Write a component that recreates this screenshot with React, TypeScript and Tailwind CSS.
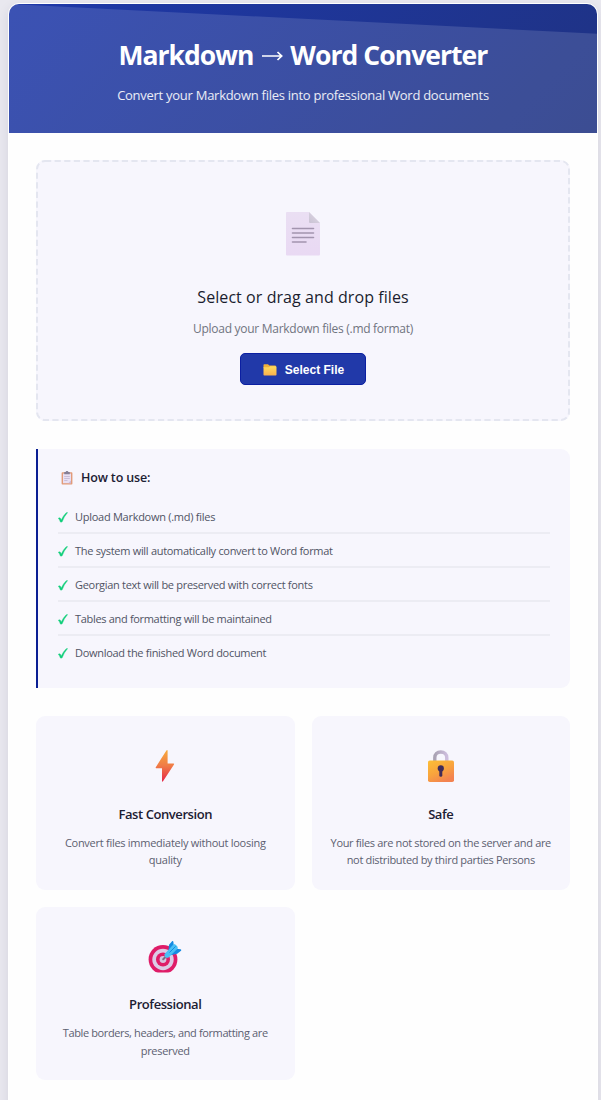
import type { ReactNode } from "react";

const steps = [
  { text: "Upload Markdown (.md) files", className: "tracking-[-0.27px]" },
  { text: "The system will automatically convert to Word format", className: "tracking-[-0.3px]" },
  { text: "Georgian text will be preserved with correct fonts", className: "tracking-[-0.3px]" },
  { text: "Tables and formatting will be maintained", className: "tracking-[-0.32px]" },
  { text: "Download the finished Word document", className: "tracking-[-0.3px]" },
];

const DocumentIcon = () => (
  <svg width="34" height="44" viewBox="0 0 34 44">
    <defs>
      <linearGradient id="page" x1="0" y1="0" x2="0" y2="1">
        <stop offset="0" stopColor="#eadff3" />
        <stop offset="1" stopColor="#e9d9f3" />
      </linearGradient>
      <linearGradient id="fold" x1="0" y1="1" x2="1" y2="0">
        <stop offset="0" stopColor="#c9c2d3" />
        <stop offset="1" stopColor="#e0dae6" />
      </linearGradient>
    </defs>
    <path d="M1 0H23L34 11V42.5Q34 43.5 33 43.5H1Q0 43.5 0 42.5V1Q0 0 1 0Z" fill="url(#page)" />
    <path d="M23 0L34 11H24Q23 11 23 10Z" fill="url(#fold)" />
    <path d="M6.5 16.5H27.5M6.5 21H27.5M6.5 25.5H27.5M6.5 30H20" stroke="#a294ae" strokeWidth="1.6" strokeLinecap="round" />
  </svg>
);

const FolderIcon = () => (
  <svg width="14" height="12" viewBox="0 0 14 12">
    <defs>
      <linearGradient id="folder" x1="0" y1="0" x2="0" y2="1">
        <stop offset="0" stopColor="#ffdc5c" />
        <stop offset="1" stopColor="#f9b04e" />
      </linearGradient>
    </defs>
    <path d="M0.5 1Q0.5 0.3 1.2 0.3H5L6.3 1.5H12Q13 1.5 13 2.5V4H0.5Z" fill="#efb03a" />
    <path d="M0.5 3.2H6L7 2.2H12.6Q13.5 2.2 13.5 3V10.7Q13.5 11.5 12.7 11.5H1.3Q0.5 11.5 0.5 10.7Z" fill="url(#folder)" />
  </svg>
);

const ClipboardIcon = () => (
  <svg width="12" height="14" viewBox="0 0 12 14">
    <rect x="0.6" y="1.2" width="10.8" height="12.4" rx="0.8" fill="#e29b79" />
    <rect x="2" y="2.6" width="8" height="9.6" fill="#e9e0f3" />
    <rect x="3.2" y="1" width="5.6" height="2.2" rx="0.5" fill="#857f97" />
    <rect x="4.7" y="0" width="2.6" height="2" rx="1" fill="#857f97" />
    <path d="M3.2 5.5H8.8M3.2 7.5H8.8M3.2 9.5H6.5" stroke="#c0b5d1" strokeWidth="0.8" />
    <path d="M10 9.5V12.2H7.3Z" fill="#c9b8dc" />
  </svg>
);

const CheckIcon = () => (
  <svg width="10" height="11" viewBox="0 0 10 11">
    <path
      d="M0.3 6.2Q1.5 5.2 2.4 6.2L3.2 8.1Q5.2 3.6 8 0.9Q8.8 0.3 9.6 0.6Q6 4.6 4.2 9.7Q3.2 10.4 2.4 10Q1.6 7.5 0.3 6.2Z"
      fill="#10ce7a"
      stroke="#10ce7a"
      strokeWidth="0.4"
    />
  </svg>
);

const BoltIcon = () => (
  <svg width="20" height="34" viewBox="0 0 20 34">
    <defs>
      <linearGradient id="bolt" x1="0" y1="0" x2="0" y2="1">
        <stop offset="0" stopColor="#f8ab3c" />
        <stop offset="0.5" stopColor="#f07b46" />
        <stop offset="1" stopColor="#e52648" />
      </linearGradient>
    </defs>
    <path d="M11.4 1.4Q12.6 0.2 12.6 2V14.4H18.4Q19.5 14.4 19 15.4L8.2 32Q7 33.4 7 31.8V19.3H1.2Q0.3 19.3 0.8 18.2Z" fill="url(#bolt)" />
  </svg>
);

const LockIcon = () => (
  <svg width="28" height="34" viewBox="0 0 28 34">
    <defs>
      <linearGradient id="lock" x1="0" y1="0" x2="0.6" y2="1">
        <stop offset="0" stopColor="#fdbf35" />
        <stop offset="0.55" stopColor="#f9a43d" />
        <stop offset="1" stopColor="#f38250" />
      </linearGradient>
      <linearGradient id="shackle" x1="0" y1="0" x2="1" y2="0">
        <stop offset="0" stopColor="#aaa3b4" />
        <stop offset="1" stopColor="#cdbddd" />
      </linearGradient>
    </defs>
    <path d="M7.8 13V8.8C7.8 5.2 10.2 3 13.8 3C17.4 3 19.8 5.2 19.8 8.8V13" fill="none" stroke="url(#shackle)" strokeWidth="3.4" />
    <rect x="1" y="11.5" width="26" height="21.5" rx="1.8" fill="url(#lock)" />
    <circle cx="13.8" cy="19.4" r="3.1" fill="#412b58" />
    <rect x="12.3" y="20" width="3" height="7.8" rx="1.4" fill="#412b58" />
  </svg>
);

const TargetIcon = () => (
  <svg width="34" height="34" viewBox="0 0 34 34">
    <clipPath id="board">
      <rect width="34" height="32.6" />
    </clipPath>
    <g clipPath="url(#board)">
      <circle cx="15" cy="19.5" r="14.4" fill="#df1c68" />
      <circle cx="15" cy="19.5" r="10.7" fill="#dccbe6" />
      <circle cx="15" cy="19.5" r="7" fill="#df1c68" />
      <circle cx="15" cy="19.5" r="3.4" fill="#d6c3df" />
    </g>
    <path d="M15.2 19.3L19 15.5" stroke="#766e85" strokeWidth="2" strokeLinecap="round" />
    <path d="M20.5 10.5L21 4.8L24.3 1Q25.3 0.7 25.4 2L25.8 5.6L20.8 13Z" fill="#168be2" />
    <path d="M23 13.5L28.8 8.8L32.6 9.2Q34 9.8 33 10.7L29.2 13.8L22.5 15.2Z" fill="#168be2" />
    <path d="M16.4 14.2L25.8 4.1Q29.2 4.8 29.9 8.2L20.6 17.6Q16.6 18.8 16.4 14.2Z" fill="#49c0f5" />
    <path d="M21.5 12.5L27.6 6.4" stroke="#168be2" strokeWidth="1" />
  </svg>
);

type FeatureProps = {
  icon: ReactNode;
  title: string;
  children: ReactNode;
};

const Feature = ({ icon, title, children }: FeatureProps) => (
  <div className="h-[173.5px] rounded-[9px] bg-[#f7f6fd] pt-[33px] text-center">
    <div className="flex h-[34px] justify-center">{icon}</div>
    <h3 className="mt-[20.5px] h-5 text-[13px] leading-5 font-semibold tracking-[-0.42px] text-[#1c2033]">{title}</h3>
    <p className="mt-[10px] text-[11px] leading-[17.5px] whitespace-nowrap text-[#5c6070]">{children}</p>
  </div>
);

export default function App() {
  return (
    <div className="h-[1100px] overflow-hidden bg-[#e9e8ef] pt-[3px] pr-[3px] pl-2 font-['Open_Sans','Noto_Sans',sans-serif]">
      <main className="h-[1120px] rounded-t-[11px] border border-white bg-[#fefefe] shadow-[0_4px_12px_rgba(40,40,80,0.1)]">
        <header className="relative h-[129px] overflow-hidden rounded-t-[10px] bg-linear-135 from-[#1e38a9] to-[#1f3282] pt-8 text-center text-white">
          <div className="absolute inset-0 bg-white/13 [clip-path:polygon(0_0,100%_23%,100%_100%,0_100%)]" />
          <h1 className="relative flex h-10 items-center justify-center text-[26.5px] font-bold whitespace-nowrap">
            <span className="tracking-[-1px]">Markdown</span>
            <svg className="mr-[7px] ml-[9px]" width="21" height="12" viewBox="0 0 21 12" fill="none" stroke="white" strokeWidth="1.7">
              <path d="M0 6H19.5M15.5 2L19.7 6L15.5 10" />
            </svg>
            <span className="tracking-[-0.95px]">Word Converter</span>
          </h1>
          <p className="relative mt-[9px] text-[13px] leading-5 tracking-[-0.27px] whitespace-nowrap text-white/90">
            Convert your Markdown files into professional Word documents
          </p>
        </header>

        <div className="p-[27px]">
          <section className="relative flex h-[261px] flex-col items-center rounded-[9px] bg-[#f7f6fd] pt-[52px]">
            <svg className="absolute inset-0" width="100%" height="100%">
              <rect x="1" y="1" width="532" height="259" rx="8" fill="none" stroke="#e4e6f0" strokeWidth="2" strokeDasharray="6.2 3.4" />
            </svg>
            <DocumentIcon />
            <h2 className="mt-[29px] text-[16px] leading-6 font-medium tracking-[0.07px] whitespace-nowrap text-[#1a1d2e]">
              Select or drag and drop files
            </h2>
            <p className="mt-[10px] text-[12px] leading-5 tracking-[-0.28px] whitespace-nowrap text-[#70747f]">
              Upload your Markdown files (.md format)
            </p>
            <button className="mt-[14px] flex h-8 w-[126px] items-center justify-center gap-2 rounded-[5px] border border-[#0b1fa2] bg-[#2139a9] pt-px pl-px font-['Liberation_Sans',sans-serif] text-[12px] font-bold whitespace-nowrap text-white">
              <FolderIcon />
              Select File
            </button>
          </section>

          <section className="mt-7 h-[239px] rounded-r-[9px] border-l-2 border-[#0a1f93] bg-[#f7f6fd] pt-[18px] pr-5 pl-5">
            <h2 className="flex h-[22px] items-center pl-[3px] text-[12.5px] font-semibold whitespace-nowrap text-[#1c2033]">
              <ClipboardIcon />
              <span className="ml-2 tracking-[-0.15px]">How to use:</span>
            </h2>
            <ul className="mt-[11px]">
              {steps.map((step) => (
                <li
                  key={step.text}
                  className="flex h-[34px] items-center gap-[7px] border-b-2 border-[#ececf3] pt-[2px] text-[11px] text-[#505464] last:border-transparent"
                >
                  <CheckIcon />
                  <span className={`whitespace-nowrap ${step.className}`}>{step.text}</span>
                </li>
              ))}
            </ul>
          </section>

          <section className="mt-7 grid grid-cols-2 gap-[17px]">
            <Feature icon={<BoltIcon />} title="Fast Conversion">
              <span className="tracking-[-0.27px]">Convert files immediately without loosing</span>
              <br />
              <span className="tracking-[-0.2px]">quality</span>
            </Feature>
            <Feature icon={<LockIcon />} title="Safe">
              <span className="tracking-[-0.34px]">Your files are not stored on the server and are</span>
              <br />
              <span className="tracking-[-0.33px]">not distributed by third parties Persons</span>
            </Feature>
            <Feature icon={<TargetIcon />} title="Professional">
              <span className="tracking-[-0.38px]">Table borders, headers, and formatting are</span>
              <br />
              <span className="tracking-[-0.3px]">preserved</span>
            </Feature>
          </section>
        </div>
      </main>
    </div>
  );
}
